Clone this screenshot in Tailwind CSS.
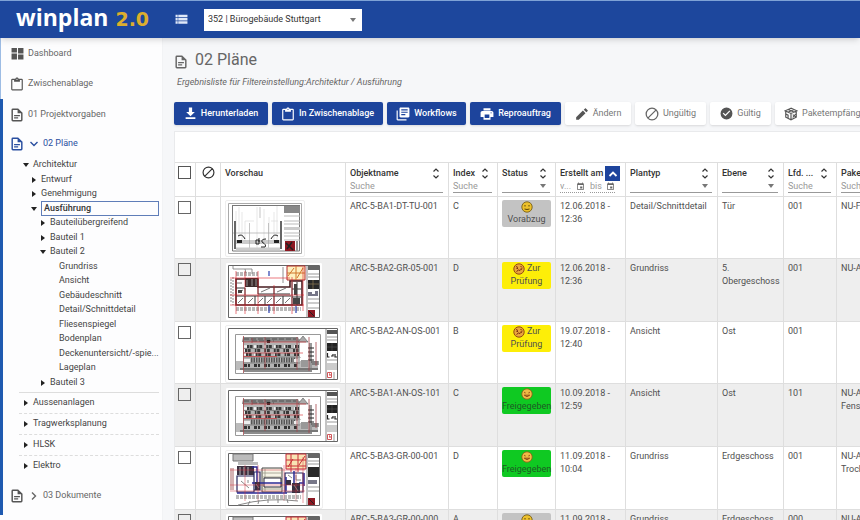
<!DOCTYPE html>
<html lang="de">
<head>
  <meta charset="UTF-8" />
  <meta name="viewport" content="width=device-width, initial-scale=1.0"/>
  <title>winplan 2.0 - 02 Pläne</title>
  <script src="https://cdn.jsdelivr.net/npm/@tailwindcss/browser@4"></script>
</head>
<body class="h-screen overflow-hidden flex flex-col bg-[#f6f7f9] font-[Roboto,sans-serif] text-[9px] text-[#4a4a4a]">

  <!-- Icon and drawing library -->
  <svg class="hidden">
    <symbol id="i-dashboard" viewBox="0 0 24 24"><path d="M1 10h10V2H1zm0 13h10V12H1zm12 0h10v-9H13zm0-21v10h10V2z"/></symbol>
    <symbol id="i-clipboard" viewBox="0 0 24 24"><path d="M19 3h-4.18C14.4 1.84 13.3 1 12 1s-2.4.84-2.82 2H4a2 2 0 0 0-2 2v16a2 2 0 0 0 2 2h16a2 2 0 0 0 2-2V5a2 2 0 0 0-2-2m-8 0a1 1 0 0 1 1 1 1 1 0 0 1-1 1 1 1 0 0 1-1-1 1 1 0 0 1 1-1M7 8h10V5h3v16H4V5h3z"/></symbol>
    <symbol id="i-file" viewBox="0 0 24 24"><path d="M5 1a2.500 2.500 0 0 0-2.500 2.500v17A2.500 2.500 0 0 0 5 23h14a2.500 2.500 0 0 0 2.500-2.500V8L14 1H5zm0 2.500h8V9h6v11.500H5zM7 12v2h10v-2zm0 4v2h7v-2z"/></symbol>
    <symbol id="i-download" viewBox="0 0 24 24"><path d="M3 22h18v-3H3zM20 9h-5V1H9v8H4l8 8z"/></symbol>
    <symbol id="i-books" viewBox="0 0 24 24"><path d="M3 6H1v15c0 1.100.9 2 2 2h15v-2H3V6zm18-5H8c-1.100 0-2 .9-2 2v13c0 1.100.9 2 2 2h13c1.100 0 2-.9 2-2V3c0-1.100-.9-2-2-2zm-1 9H9V8h11v2zm-4 4H9v-2h7v2zm4-8H9V4h11v2z"/></symbol>
    <symbol id="i-print" viewBox="0 0 24 24"><path d="M20 7H4c-1.660 0-3 1.340-3 3v7h5v5h12v-5h5v-7c0-1.660-1.340-3-3-3zm-4 12H8v-6h8v6zm3-8c-.55 0-1-.45-1-1s.45-1 1-1 1 .45 1 1-.45 1-1 1zm-1-9H6v4h12V2z"/></symbol>
    <symbol id="i-edit" viewBox="0 0 24 24"><path d="M2 17.500V22h4.500L18 10.500 13.500 6 2 17.500zM21.700 6.900c.39-.39.39-1.020 0-1.410l-3.100-3.100c-.39-.39-1.020-.39-1.410 0L15 4.500 19.500 9z"/></symbol>
    <symbol id="i-void" viewBox="0 0 24 24"><path d="M18.700 5.300 5.300 18.700M22 12a10 10 0 1 1-20 0 10 10 0 0 1 20 0z" fill="none" stroke="currentColor" stroke-width="2.200"/></symbol>
    <symbol id="i-check" viewBox="0 0 24 24"><path d="M12 1a11 11 0 1 0 0 22 11 11 0 0 0 0-22zm-2 16-5-5 1.600-1.600L10 13.800l7.400-7.400L19 8z"/></symbol>
    <symbol id="i-package" viewBox="0 0 24 24"><path d="M12 2 2 6.500 12 11l10-4.500zM3 6.500v11L12 22l9-4.500v-11M12 11v11M7 4.200l10 4.500M17 4.200 7 9M3 12l4 2v5M15 13l5 4M15 18l5-6" fill="none" stroke="currentColor" stroke-width="2"/></symbol>
    <symbol id="i-list" viewBox="0 0 24 24"><path d="M1 8h4V3H1zm0 6h4V9H1zm0 6h4v-5H1zM6 8h17V3H6zm0 6h17V9H6zm0 6h17v-5H6z"/></symbol>
    <symbol id="i-calendar" viewBox="0 0 24 24"><path d="M19 3h-1V1h-2v2H8V1H6v2H5c-1.110 0-2 .9-2 2v14c0 1.100.89 2 2 2h14c1.100 0 2-.9 2-2V5c0-1.100-.9-2-2-2zm0 16H5V8h14zM11 12h6v5h-6z"/></symbol>
    <symbol id="i-down" viewBox="0 0 10 10"><path d="m1.500 3 3.500 3.500L8.500 3" fill="none" stroke="currentColor" stroke-width="1.400"/></symbol>
    <symbol id="i-right" viewBox="0 0 10 10"><path d="M3 1.500 6.500 5 3 8.500" fill="none" stroke="currentColor" stroke-width="1.400"/></symbol>
    <symbol id="i-up" viewBox="0 0 10 10"><path d="M1.500 7 5 3.500 8.500 7" fill="none" stroke="currentColor" stroke-width="1.800"/></symbol>
    <symbol id="i-sort" viewBox="0 0 8 12"><path d="M1.500 4 4 1.500 6.500 4M1.500 8 4 10.500 6.500 8" fill="none" stroke="currentColor" stroke-width="1.200"/></symbol>
    <symbol id="i-open" viewBox="0 0 6 6"><path d="M0 1h6L3 5z"/></symbol>
    <symbol id="i-closed" viewBox="0 0 6 6"><path d="M1 0v6l4-3z"/></symbol>

    <symbol id="s-neutral" viewBox="0 0 12 12"><circle cx="6" cy="6" r="5.200" fill="#ecc02c" stroke="#6b5310" stroke-width=".8"/><path d="M4 4v1.500M8 4v1.500M3.500 8q2.500 1 5 0" fill="none" stroke="#4a3505" stroke-width=".9"/></symbol>
    <symbol id="s-check" viewBox="0 0 12 12"><circle cx="6" cy="6" r="5.200" fill="#eaa63c" stroke="#8a3c10" stroke-width=".9"/><path d="M3 3.500l2 1M7.500 3l1.500 1.500M3.500 8.500l2-1.500 1.500.5 2-2M3.500 5.500h1.500M7.500 6h1.500" fill="none" stroke="#6e1f08" stroke-width=".9"/></symbol>
    <symbol id="s-happy" viewBox="0 0 12 12"><circle cx="6" cy="6" r="5.200" fill="#f0bb45" stroke="#8a5a18" stroke-width=".8"/><path d="M3 5q.8-1.200 1.600 0M7.400 5Q8.200 3.800 9 5M3.300 7.200q2.700 3 5.400 0z" fill="none" stroke="#8a3c10" stroke-width=".9"/></symbol>

    <!-- door detail sheet -->
    <symbol id="t-door" viewBox="0 0 74 51">
      <path d="M.5.500h73v50H.5z" fill="#fff" stroke="#aaa"/>
      <path d="M4 2.500h68M4.500 2v46h67V2" fill="none" stroke="#777"/>
      <path d="M8 38V8M11 36V4M14 37V9M29 45V4M36 40V6M41 38V14M46 38V9M49 38V3M17 38V18h9M43 18h7" fill="none" stroke="#ddd" stroke-width=".7"/>
      <path d="M32 15V4M21.500 45V20M40.500 45V20M5 30h48" fill="none" stroke="#aaa" stroke-width=".7"/>
      <path d="M6 18h2v28H6zM52 18h2v28h-2z" fill="#666"/>
      <path d="M8 38h44M8 40h44" stroke="#999"/>
      <path d="M8 46h44" stroke="#ccc" stroke-width="3"/>
      <path d="M9 37h5v3H9zM46 37h5v3h-5z" fill="#222"/>
      <path d="M28 37v4h3v-4zM38 36q-5 0-4 3 5 3 3 5h-4M31 35v4M10 33q4-3 7 3M43 36q3-6 7-3" fill="none" stroke="#222" stroke-width="1"/>
      <path d="M56 3h16v7H56z" fill="#888"/>
      <path d="M56 13h16M56 18h16M56 21h16M56 30h16M56 33h16M56 37h16" stroke="#bbb"/>
      <path d="M56 24h16v3H56z" fill="#ccc"/>
      <path d="M57 38h10v10H57z" fill="#8d1822"/><path d="m59 46 5-7M58 40l7 7" stroke="#222" stroke-width="1.500"/><path d="M69 38v10" stroke="#999" stroke-width="2"/>
    </symbol>

    <!-- floor plan sheet -->
    <symbol id="t-plan" viewBox="0 0 92 53">
      <path d="M.5.500h91v52H.5z" fill="#fff" stroke="#666"/>
      <path d="M5 1v3h12l1 4M17 4h7v5M55 2v16" fill="none" stroke="#777" stroke-width=".8"/>
      <path d="M8 8h22M8 10h22M8 43h65M8 45h65" stroke="#777" stroke-width="1.200" stroke-dasharray="3 1"/>
      <path d="M5 12v28M3 14v24" stroke="#888" stroke-dasharray="2 1"/>
      <path d="M59 1h18v14H59z" fill="#fdf0c0" stroke="#b5282a"/>
      <path d="m60 11 6-8M69 13l6-10M68 1v14M59 8h18" stroke="#d0762c" fill="none"/>
      <path d="M8 14h22v8h32v-6h12v24H8z" fill="#fff" stroke="#471d20" stroke-width="1.600"/>
      <path d="M17 13h13v9H17z" fill="#3c2c2c"/><path d="M19 15v6M24 14v7M28 14v7" stroke="#bbb" stroke-width=".7"/>
      <path d="M8 31h55M17 31v9M27 31v9M37 31v9M46 31v9M55 31v9M64 17v23M30 22v7h32M46 22v7M8 23h9v7M64 24h9M64 32h9M69 17v23" stroke="#333" fill="none"/>
      <path d="m10 38 5-5M20 38l5-5M30 38l5-5M39 38l5-5M48 38l5-5M57 38l5-5M33 27l9-4M49 27l9-4M10 28l5-3M9 18h5" stroke="#555" stroke-width=".8"/>
      <path d="M66 19h3v11h-3zM65 33h7v6h-7zM10 25h4v3h-4z" fill="#444"/>
      <path d="M2 13h60M2 30h74M2 40h74M8 6v43M17 6v43M30 6v43M46 20v29M64 12v37M75 2v44" stroke="#dd2028" stroke-opacity=".75" stroke-width=".8"/>
      <path d="M41 6v5M41 40v8M68 41v7" stroke="#2a3fae" stroke-width="1.200"/>
      <path d="M79 1v51" stroke="#888"/><path d="M80 1h11v4H80z" fill="#666"/><path d="M80 9h11M80 12h11M80 34h11M80 38h11M80 43h11" stroke="#999"/>
      <path d="M80 15h11v9H80z" fill="#282828"/><path d="M80 19h11M85 15v9" stroke="#8c7a50" stroke-width=".7"/><path d="M80 27h4v2h3v-3h3v5H80z" fill="#778"/>
      <path d="M80 45h7v7h-7z" fill="#8d1822"/><path d="m81 46 5 5" stroke="#222"/>
    </symbol>

    <!-- ground floor sheet -->
    <symbol id="t-ground" viewBox="0 0 92 53">
      <path d="M.5.500h91v52H.5z" fill="#fff" stroke="#666"/>
      <path d="M5 1h20v7H5z" fill="#bbb" stroke="#777"/><path d="M10 9h20v3H10z" fill="#bbb"/>
      <path d="M58 1h20v15H58z" fill="#f8e3b4" stroke="#c4283a"/><path d="M63 1v18M70 1v18M58 7h20M58 13h20M60 14l5-8M71 12l6-9" stroke="#c92e36" fill="none"/>
      <path d="M9 13h17v9H9z" fill="#3b3040"/><path d="M12 14v8M16 14v8M20 14v8" stroke="#bbb"/>
      <path d="M9 23h17v16H9zM26 19h6v18h-6zM57 20h18v19H57z" fill="#fff" stroke="#26265a" stroke-width="1.200"/>
      <path d="M34 15h20v24H34z" fill="#f7f4e6" stroke="#444"/><path d="M34 20h20M34 24h20M34 36h20M37 16v22" stroke="#998" stroke-width=".8"/>
      <path d="M36 25h17v9H36z" fill="#fff" stroke="#223" />
      <path d="M24 14h5v16h-5M58 24v14M66 18v20M71 30h5M9 40h50M76 20v13M26 30h28" stroke="#2c2a94" stroke-width="1.500" fill="none"/>
      <path d="M64 30h8v10h-8zM27 29h5v8h-5zM58 27h5v5h-5z" fill="#353042"/><path d="M3 15v22M5 15v22" stroke="#a66"/>
      <path d="M66 32l4 6M28 31l3 4M60 22l4 3M68 22v5h5M13 28l8 7M20 27v3" stroke="#888" fill="none"/>
      <path d="M2 17h75M2 32h75M2 38h75M17 12v36M30 12v36M56 12v36M68 15v33M75 4v46" stroke="#d43440" stroke-opacity=".6" stroke-width=".8"/>
      <path d="M8 43h65M8 45h65" stroke="#777" stroke-dasharray="3 1"/><path d="M10 52q30-8 60-4M20 52l2-4M30 51l1-4M40 50v-4M50 50v-4M60 50l-1-4" stroke="#888" fill="none"/>
      <path d="M79 1v51" stroke="#888"/><path d="M80 1h11v4H80z" fill="#666"/><path d="M80 8h11M80 11h11M80 34h11M80 38h11" stroke="#999"/>
      <path d="M80 14h11v10H80z" fill="#282828"/><path d="M80 27h9v4h-9z" fill="#778"/><path d="M80 45h7v7h-7z" fill="#8d1822"/><path d="m81 46 5 5" stroke="#222"/>
    </symbol>

    <!-- facade sheet -->
    <symbol id="t-facade" viewBox="0 0 110 52">
      <path d="M.5.500h109v51H.5z" fill="#fff" stroke="#666"/><path d="M7.500 6.500h85v39h-85z" fill="none" stroke="#999"/>
      <path d="M8 33h82v9H8z" fill="#bbb"/>
      <path d="M15 11h57v30H15z" fill="#b4b4b4"/><path d="M15 9h55l2 5H14z" fill="#8a8a8a"/>
      <path d="M16 11h52M24 13h22" stroke="#444" stroke-width=".8" stroke-dasharray="5 2"/><path d="M39 12h3v3h-3z" fill="#222"/>
      <!-- window bands, light gaps first and dark panes over them -->
      <path d="M16 18.500h55M16 22.500h55M16 26.500h55M16 37.500h55" stroke="#f4f4f4" stroke-width="2.500" stroke-dasharray="3 7"/>
      <path d="M19 18.500h52M17 22.500h54M18 26.500h53" stroke="#383838" stroke-width="3" stroke-dasharray="2 .6 3 4"/>
      <path d="M16 37.500h54" stroke="#333" stroke-width="3" stroke-dasharray="3 1 2 4"/>
      <path d="M23 32h44" stroke="#555" stroke-width="5" stroke-dasharray="1.500 1"/><path d="M16 31h6v3h-6zM66 31h4v3h-4z" fill="#eee"/>
      <path d="M16 20.500h55M16 29h57M15 35h57" stroke="#777" stroke-width=".8"/>
      <path d="M72 15h8v14h-8z" fill="#fff"/><path d="m70 14 5-6 5 6z" fill="#aaa" stroke="#555" stroke-width=".6"/>
      <path d="M73 32h7v7h-7z" fill="#999"/><path d="M81 15h3v25h-3z" fill="#999"/><path d="M80 20h6M80 24h6M80 28h6M80 32h6" stroke="#222" stroke-width="1.200"/>
      <path d="M84 36h7M83 34h8" stroke="#444" stroke-width="1.200"/><path d="M12 41h78" stroke="#333"/><path d="M16 43h68" stroke="#666" stroke-width="1.500"/>
      <path d="M15 25h60M15 28.500h34M15 14h63" stroke="#d83438" stroke-opacity=".8" stroke-width=".8"/><path d="M15.500 8v37M24 10v5M37 9v32M69 9v33M81 9v34M88 14v24" stroke="#a5484b" stroke-width=".8"/>
      <path d="M98 1v50" stroke="#888"/><path d="M99 2h10v4H99z" fill="#555"/><path d="M99 9h10M99 12h10M99 32h10M99 36h10" stroke="#999"/>
      <path d="M99 15h10v8H99z" fill="#222"/><path d="M104 15v8M99 19h10" stroke="#555" stroke-width=".6"/><path d="M99.500 25v4h2M103 28h2v-2M107 26v3h2" fill="none" stroke="#222" stroke-width="1.200"/>
      <path d="M99 36h10v6H99z" fill="#ccc"/><path d="M99.500 44.500h4v5h-4z" fill="#fff" stroke="#d0565a"/><path d="M101 46h1v2" stroke="#c33" fill="none"/><path d="M106 44v7" stroke="#999"/>
    </symbol>
  </svg>

  <!-- Top bar -->
  <header class="relative z-10 h-[38px] shrink-0 flex items-center bg-[#1d479d] border-t border-[#7ea2d6] shadow-md">
    <a href="#" class="flex items-baseline gap-[7px] w-[159px] ml-4 pb-1 leading-none">
      <span class="font-['Open_Sans',sans-serif] font-bold text-[23px] text-white">winplan</span>
      <span class="font-['DejaVu_Sans',sans-serif] font-bold text-[19px] text-[#dcae2e]">2.0</span>
    </a>
    <button type="button" aria-label="Menü" class="text-white mr-4"><svg class="size-[13px] fill-[#dfe8f8]"><use href="#i-list"/></svg></button>
    <div class="relative w-[158px]">
      <select aria-label="Projekt" class="appearance-none block w-full h-[22px] px-1 bg-white text-[#333] text-[9px]">
        <option>352 | Bürogebäude Stuttgart</option>
      </select>
      <svg class="absolute right-[6px] top-2 size-[6px] fill-[#777] pointer-events-none"><use href="#i-open"/></svg>
    </div>
  </header>

  <div class="flex flex-1 min-h-0">
    <!-- Navigation -->
    <nav class="w-[163px] shrink-0 overflow-hidden bg-[#fdfdfe] border-r border-[#f2f3f5] text-[#666]">
      <div class="border-l border-[#9dbce4]">
        <a href="#" class="flex items-center gap-1 h-[31px] pl-[10px]"><svg class="size-[13px] fill-[#555]"><use href="#i-dashboard"/></svg>Dashboard</a>
        <a href="#" class="flex items-center gap-1 h-[30px] pl-[9px]"><svg class="size-[14px] fill-[#555]"><use href="#i-clipboard"/></svg>Zwischenablage</a>
      </div>
      <div class="border-l-3 border-[#1f5ab0]">
        <a href="#" class="flex items-center gap-1 h-[31px] pl-[7px]"><svg class="size-[14px] fill-[#555]"><use href="#i-file"/></svg>01 Projektvorgaben</a>
        <a href="#" class="flex items-center gap-1 h-[28px] pl-[7px] text-[#2a4fa0]"><svg class="size-[14px] fill-current mr-px"><use href="#i-file"/></svg><svg class="size-[10px]"><use href="#i-down"/></svg>02 Pläne</a>
        <ul id="tree" class="text-[#444]"></ul>
        <ul id="groups" class="mt-[2px] ml-4 mr-[3px] text-[#444]"></ul>
        <a href="#" class="flex items-center gap-1 h-[39px] pl-[7px]"><svg class="size-[14px] fill-[#555] mr-px"><use href="#i-file"/></svg><svg class="size-[10px]"><use href="#i-right"/></svg>03 Dokumente</a>
      </div>
    </nav>

    <main class="flex-1 min-w-0 flex flex-col pl-[11px] overflow-hidden">
      <h1 class="flex items-center gap-[7px] h-[24px] mt-[10px] text-[16px] text-[#666]"><svg class="size-[14px] fill-[#666] mt-[3px]"><use href="#i-file"/></svg>02 Pläne</h1>
      <p class="pl-[3px] h-[20px] leading-[20px] mb-[10px] italic text-[#666]">Ergebnisliste für Filtereinstellung:Architektur / Ausführung</p>

      <!-- Actions -->
      <div class="flex gap-1 shrink-0 whitespace-nowrap font-medium text-white">
        <button type="button" class="flex shrink-0 items-center justify-center gap-1 w-[94px] h-[23px] rounded-xs bg-[#1d449c] shadow"><svg class="size-[13px] fill-current"><use href="#i-download"/></svg>Herunterladen</button>
        <button type="button" class="flex shrink-0 items-center justify-center gap-1 w-[111px] h-[23px] rounded-xs bg-[#1d449c] shadow"><svg class="size-[14px] fill-current"><use href="#i-clipboard"/></svg>In Zwischenablage</button>
        <button type="button" class="flex shrink-0 items-center justify-center gap-1 w-[79px] h-[23px] rounded-xs bg-[#1d449c] shadow"><svg class="size-[14px] fill-current"><use href="#i-books"/></svg>Workflows</button>
        <button type="button" class="flex shrink-0 items-center justify-center gap-1 w-[91px] h-[23px] rounded-xs bg-[#1d449c] shadow"><svg class="size-[14px] fill-current"><use href="#i-print"/></svg>Reproauftrag</button>
        <button type="button" class="flex shrink-0 items-center justify-center gap-1 w-[66px] h-[23px] rounded-xs bg-white text-[#777] font-normal shadow"><svg class="size-[14px] fill-[#555]"><use href="#i-edit"/></svg>Ändern</button>
        <button type="button" class="flex shrink-0 items-center justify-center gap-1 w-[71px] h-[23px] rounded-xs bg-white text-[#777] font-normal shadow"><svg class="size-[14px] text-[#666]"><use href="#i-void"/></svg>Ungültig</button>
        <button type="button" class="flex shrink-0 items-center justify-center gap-1 w-[61px] h-[23px] rounded-xs bg-white text-[#777] font-normal shadow"><svg class="size-[13px] fill-[#555]"><use href="#i-check"/></svg>Gültig</button>
        <button type="button" class="flex shrink-0 items-center gap-1 pl-[9px] pr-4 h-[23px] rounded-xs bg-white text-[#777] font-normal shadow"><svg class="size-[14px] text-[#555]"><use href="#i-package"/></svg>Paketempfänger</button>
      </div>

      <!-- Plan list -->
      <section class="mt-[6px] pt-[30px] flex-1 min-h-0 overflow-hidden bg-white border-l border-t border-[#e9eaec]">
        <table class="table-fixed w-[800px] border-separate border-spacing-0 text-left">
          <colgroup>
            <col class="w-[21px]"><col class="w-[25px]"><col class="w-[125px]"><col class="w-[103px]"><col class="w-[49px]"><col class="w-[58px]"><col class="w-[70px]"><col class="w-[92px]"><col class="w-[66px]"><col class="w-[53px]"><col>
          </colgroup>
          <thead id="head"></thead>
          <tbody id="plans" class="text-[#505050] leading-[13px]"></tbody>
        </table>
      </section>
    </main>
  </div>

  <script>
    // indent level, arrow, label
    const tree = [
      [0, 'open', 'Architektur'],
      [1, 'closed', 'Entwurf'],
      [1, 'closed', 'Genehmigung'],
      [1, 'open', 'Ausführung'],
      [2, 'closed', 'Bauteilübergreifend'],
      [2, 'closed', 'Bauteil 1'],
      [2, 'open', 'Bauteil 2'],
      [3, '', 'Grundriss'],
      [3, '', 'Ansicht'],
      [3, '', 'Gebäudeschnitt'],
      [3, '', 'Detail/Schnittdetail'],
      [3, '', 'Fliesenspiegel'],
      [3, '', 'Bodenplan'],
      [3, '', 'Deckenuntersicht/-spie...'],
      [3, '', 'Lageplan'],
      [2, 'closed', 'Bauteil 3']
    ];
    const indent = ['pl-[20px]', 'pl-[28px]', 'pl-[37px]', 'pl-[46px]'];

    document.getElementById('tree').innerHTML = tree.map(([level, arrow, label]) => `
      <li class="flex items-center gap-1 odd:h-[14px] even:h-[15px] pr-[3px] ${indent[level]}">
        <svg class="size-[6px] shrink-0 fill-[#222]">${arrow ? `<use href="#i-${arrow}"/>` : ''}</svg>
        <a href="#" class="${label === 'Ausführung' ? 'flex-1 h-[15px] leading-[13px] pl-[2px] border border-[#5f7db8] font-medium text-[#333]' : 'whitespace-nowrap'}">${label}</a>
      </li>`).join('');

    document.getElementById('groups').innerHTML = ['Aussenanlagen', 'Tragwerksplanung', 'HLSK', 'Elektro'].map(label => `
      <li class="flex items-center gap-1 h-[21px] pl-1 border-t border-dashed border-[#ddd] first:border-solid"><svg class="size-[6px] fill-[#222]"><use href="#i-closed"/></svg><a href="#">${label}</a></li>`).join('');

    // label, filter kind
    const columns = [
      ['Objektname', 'text'], ['Index', 'text'], ['Status', 'select'], ['Erstellt am', 'date'],
      ['Plantyp', 'select'], ['Ebene', 'select'], ['Lfd. ...', 'text'], ['Paketempfänger', 'text']
    ];

    const filters = {
      text: label => `<input type="text" aria-label="${label} filtern" placeholder="Suche" class="block w-full h-[12px] border-b border-[#999] placeholder:text-[#999] font-normal outline-none">`,
      select: label => `<div class="relative"><select aria-label="${label} filtern" class="appearance-none block w-full h-[12px] border-b border-[#999]"><option></option></select><svg class="absolute right-1 top-[2px] size-[6px] fill-[#777] pointer-events-none"><use href="#i-open"/></svg></div>`,
      date: () => `<div class="flex gap-[5px] font-normal">
          <div class="flex w-[25px] items-center h-[12px] border-b border-dotted border-[#999]"><input type="text" aria-label="Erstellt von" placeholder="v..." class="w-[16px] placeholder:text-[#999] outline-none"><button type="button" aria-label="Von Datum wählen"><svg class="size-[9px] fill-[#666]"><use href="#i-calendar"/></svg></button></div>
          <div class="flex w-[25px] items-center h-[12px] border-b border-dotted border-[#999]"><input type="text" aria-label="Erstellt bis" placeholder="bis" class="w-[16px] placeholder:text-[#999] outline-none"><button type="button" aria-label="Bis Datum wählen"><svg class="size-[9px] fill-[#666]"><use href="#i-calendar"/></svg></button></div>
        </div>`
    };

    document.getElementById('head').innerHTML = `
      <tr class="h-[35px] text-[#333] align-top">
        <th class="border-y border-r border-[#dedede] pt-[3px] pl-[3px]"><input type="checkbox" aria-label="Alle auswählen" class="appearance-none block size-[13px] border border-[#555]"></th>
        <th class="border-y border-r border-[#dedede] pt-[3px] pl-[6px]"><svg class="size-[13px]"><use href="#i-void"/></svg></th>
        <th class="border-y border-r border-[#dedede] pt-[3px] pl-1 font-medium leading-[15px]">Vorschau</th>
        ${columns.map(([label, kind]) => `
        <th class="border-y border-r border-[#dedede] pt-[3px] pl-1 pr-[5px] font-medium">
          <div class="flex items-center justify-between h-[15px]">
            <span class="whitespace-nowrap">${label}</span>
            ${kind === 'date'
              ? '<button type="button" aria-label="Sortiert" class="flex shrink-0 items-center justify-center size-[15px] bg-[#1d449c] text-white"><svg class="size-[10px]"><use href="#i-up"/></svg></button>'
              : '<button type="button" aria-label="Sortieren" class="shrink-0 px-[3px]"><svg class="w-[8px] h-[13px]"><use href="#i-sort"/></svg></button>'}
          </div>
          ${filters[kind](label)}
        </th>`).join('')}
      </tr>`;

    const states = {
      draft: '<div class="h-[27px] rounded-xs bg-[#c3c3c3] text-center whitespace-nowrap"><svg class="inline size-[12px]"><use href="#s-neutral"/></svg><br>Vorabzug</div>',
      check: '<div class="h-[27px] rounded-xs bg-[#fdee08] text-center whitespace-nowrap"><svg class="inline size-[12px]"><use href="#s-check"/></svg> Zur<br>Prüfung</div>',
      free: '<div class="h-[27px] rounded-xs bg-[#0fc922] text-center whitespace-nowrap text-[#1e5a24]"><svg class="inline size-[12px]"><use href="#s-happy"/></svg><br>Freigegeben</div>'
    };
    const thumbs = {
      door: '<svg class="w-[74px] h-[51px]"><use href="#t-door"/></svg>',
      plan: '<svg class="w-[92px] h-[53px]"><use href="#t-plan"/></svg>',
      ground: '<svg class="w-[92px] h-[53px]"><use href="#t-ground"/></svg>',
      facade: '<svg class="w-[110px] h-[52px]"><use href="#t-facade"/></svg>'
    };

    const plans = [
      ['door', 'ARC-5-BA1-DT-TU-001', 'C', 'draft', '12.06.2018 - 12:36', 'Detail/Schnittdetail', 'Tür', '001', 'NU-Fenster'],
      ['plan', 'ARC-5-BA2-GR-05-001', 'D', 'check', '12.06.2018 - 12:36', 'Grundriss', '5. Obergeschoss', '001', 'NU-Ausbau'],
      ['facade', 'ARC-5-BA2-AN-OS-001', 'B', 'check', '19.07.2018 - 12:40', 'Ansicht', 'Ost', '001', ''],
      ['facade', 'ARC-5-BA1-AN-OS-101', 'C', 'free', '10.09.2018 - 12:59', 'Ansicht', 'Ost', '101', 'NU-Ausbau<br>Fensterbau'],
      ['ground', 'ARC-5-BA3-GR-00-001', 'D', 'free', '11.09.2018 - 10:04', 'Grundriss', 'Erdgeschoss', '001', 'NU-Ausbau<br>Trockenbau'],
      ['ground', 'ARC-5-BA3-GR-00-000', 'A', 'draft', '11.09.2018 - 10:04', 'Grundriss', 'Erdgeschoss', '000', 'NU-Ausbau']
    ];

    document.getElementById('plans').innerHTML = plans.map(([thumb, name, index, state, ...rest]) => `
      <tr class="align-top odd:h-[62px] even:h-[63px] even:bg-[#eeeeee]">
        <td class="border-r border-b border-[#dedede] pt-1 pl-[3px]"><input type="checkbox" aria-label="${name} auswählen" class="appearance-none block size-[13px] border border-[#666]"></td>
        <td class="border-r border-b border-[#dedede]"></td>
        <td class="border-r border-b border-[#dedede] pl-1 pt-[3px]"><div class="inline-block align-top p-[2px] bg-white border border-[#eee] rounded-xs">${thumbs[thumb]}</div></td>
        <td class="border-r border-b border-[#dedede] pl-1 pt-[3px] whitespace-nowrap">${name}</td>
        <td class="border-r border-b border-[#dedede] pl-1 pt-[3px]">${index}</td>
        <td class="border-r border-b border-[#dedede] pl-1 pr-1 pt-[3px]">${states[state]}</td>
        ${rest.map(text => `<td class="border-r border-b border-[#dedede] pl-1 pt-[3px]">${text}</td>`).join('')}
      </tr>`).join('');
  </script>
</body>
</html>
